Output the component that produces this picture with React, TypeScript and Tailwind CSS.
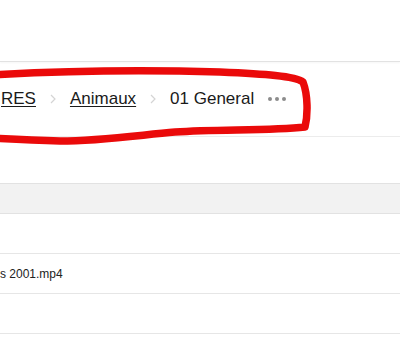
export default function App() {
  const crumbs = ["RES", "Animaux"];

  return (
    <div className="relative h-[357px] w-[400px] overflow-hidden bg-white font-['Liberation_Sans',Arial,sans-serif] text-[#1a1a1a]">
      {/* top bar */}
      <div className="h-[62px] border-b border-[#e2e2e2] shadow-[0_1px_2px_rgba(0,0,0,0.04)]" />

      {/* breadcrumb */}
      <div className="flex h-[75px] items-center border-b border-[#ececec] pb-[1px] text-[17px]">
        {crumbs.map((c, i) => (
          <div key={c} className={`flex items-center ${i === 0 ? "ml-[1px]" : ""}`}>
            <a className="underline decoration-1 underline-offset-[2px]">{c}</a>
            <svg
              width="6"
              height="10"
              viewBox="0 0 6 10"
              className="mx-[14px]"
            >
              <path d="M1 1 L5 5 L1 9" fill="none" stroke="#d4d4d4" strokeWidth="1.2" />
            </svg>
          </div>
        ))}
        <span>01 General</span>
        <div className="ml-[14px] flex items-center gap-[3px]">
          <span className="h-[4px] w-[4px] rounded-full bg-[#8c8c8c]" />
          <span className="h-[4px] w-[4px] rounded-full bg-[#8c8c8c]" />
          <span className="h-[4px] w-[4px] rounded-full bg-[#8c8c8c]" />
        </div>
      </div>

      {/* spacing */}
      <div className="h-[46px]" />

      {/* table header band */}
      <div className="h-[31px] border-y border-[#e2e2e2] bg-[#f2f2f2]" />

      {/* rows */}
      <div className="h-[40px] border-b border-[#e6e6e6]" />
      <div className="flex h-[40px] items-center border-b border-[#e6e6e6] text-[12px] text-[#222]">
        <span>s 2001.mp4</span>
      </div>
      <div className="h-[40px] border-b border-[#e6e6e6]" />

      {/* hand-drawn annotation */}
      <svg
        className="pointer-events-none absolute left-0 top-0"
        width="400"
        height="357"
        viewBox="0 0 400 357"
      >
        <path
          d="M -10 75 C 60 71, 150 70, 220 72 C 265 74, 295 76, 303 82 C 308 95, 308 115, 305 127 C 270 131, 220 129, 175 132 C 140 135, 100 141, 60 141 C 30 140, 10 139, -10 138"
          fill="none"
          stroke="#ea0a0a"
          strokeWidth="7.5"
          strokeLinecap="round"
          strokeLinejoin="round"
        />
      </svg>
    </div>
  );
}
